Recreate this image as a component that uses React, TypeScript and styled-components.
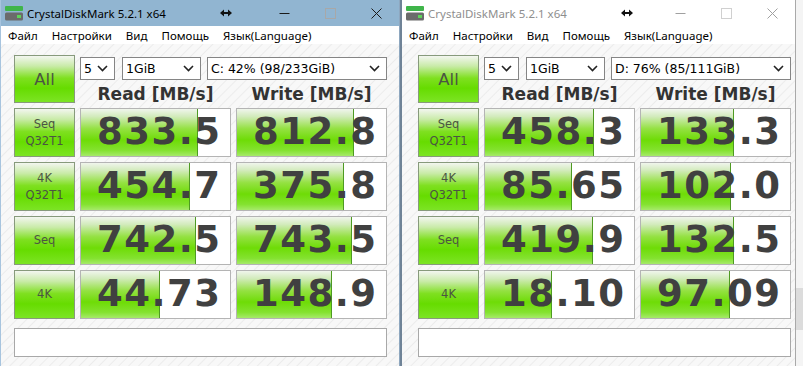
import React from "react";
import styled, { createGlobalStyle } from "styled-components";

const GlobalStyle = createGlobalStyle`
  html, body {
    margin: 0;
    padding: 0;
    background: #f0f0f0;
    overflow: hidden;
  }
  #root {
    width: 803px;
    height: 366px;
  }
`;

const Desktop = styled.div`
  display: flex;
  width: 803px;
  height: 366px;
  overflow: hidden;
  background: #f2f2f2;
`;

const Window = styled.div<{ $w: number; $active?: boolean }>`
  flex: 0 0 ${(p) => p.$w}px;
  display: flex;
  flex-direction: column;
  box-sizing: border-box;
  border-left: ${(p) => (p.$active ? "1px solid #a7c4de" : "2px solid #6f8397")};
  border-right: 1px solid ${(p) => (p.$active ? "#8ea7bf" : "#a9a9a9")};
  background: repeating-linear-gradient(135deg, #f8f8f8 0px, #f8f8f8 5px, #ececec 6px, #f8f8f8 7px);
  overflow: hidden;
`;

const TitleBar = styled.div<{ $active?: boolean }>`
  height: 26px;
  flex: 0 0 26px;
  display: flex;
  align-items: center;
  background: ${(p) => (p.$active ? "#91b5d1" : "#ffffff")};
  color: ${(p) => (p.$active ? "#000" : "#8e8e8e")};
  font-family: "Noto Sans", "Open Sans", sans-serif;
  font-size: 11.5px;
`;

const AppIcon = styled.svg`
  margin-left: 4px;
  flex: 0 0 18px;
`;

const Title = styled.div`
  margin-left: 4px;
  width: 193px;
  white-space: nowrap;
`;

const Arrow = styled.svg`
  flex: 0 0 12px;
`;

const Spacer = styled.div`
  flex: 1;
`;

const CaptionButton = styled.div`
  width: 46px;
  height: 26px;
  display: flex;
  align-items: center;
  justify-content: center;
`;

const MenuBar = styled.div`
  height: 18px;
  flex: 0 0 18px;
  display: flex;
  align-items: center;
  background: #ffffff;
  font-family: "Noto Sans", "Open Sans", sans-serif;
  font-size: 11.5px;
  color: #000;
`;

const MenuItem = styled.span`
  padding: 0 7px;
  white-space: nowrap;
`;

const Content = styled.div<{ $pad: number }>`
  padding: 11px 0 0 ${(p) => p.$pad}px;
`;

const Board = styled.div`
  display: grid;
  grid-template-columns: 61px 151px 151px;
  grid-template-rows: 48px repeat(4, 49px);
  gap: 5px;
`;

const LabelButton = styled.div<{ $big?: boolean }>`
  box-sizing: border-box;
  border: 1px solid #879a7c;
  background: linear-gradient(
    to bottom,
    #f3f6f0 0%,
    #c9eba8 22%,
    #7fe020 48%,
    #66dc00 70%,
    #7ce424 100%
  );
  display: flex;
  flex-direction: column;
  align-items: center;
  justify-content: center;
  color: #4b5543;
  font-family: "DejaVu Sans", Verdana, sans-serif;
  font-size: ${(p) => (p.$big ? "16.5px" : "11.5px")};
  line-height: 17px;
`;

const Controls = styled.div`
  grid-column: 2 / 4;
  display: flex;
  flex-direction: column;
`;

const ComboRow = styled.div`
  display: flex;
  margin-top: 2px;
  height: 23px;
`;

const Combo = styled.div<{ $w: number; $gap: number }>`
  box-sizing: border-box;
  width: ${(p) => p.$w}px;
  margin-right: ${(p) => p.$gap}px;
  height: 23px;
  border: 1px solid #858585;
  background: #fff;
  display: flex;
  align-items: center;
  padding: 0 6px 0 3px;
  font-family: "DejaVu Sans", Verdana, sans-serif;
  font-size: 12.5px;
  color: #000;
`;

const ComboText = styled.span`
  flex: 1;
  white-space: nowrap;
`;

const HeaderRow = styled.div`
  display: grid;
  grid-template-columns: 151px 151px;
  column-gap: 5px;
  height: 23px;
  align-items: end;
`;

const Header = styled.div`
  text-align: center;
  font-family: "DejaVu Sans", Verdana, sans-serif;
  font-weight: bold;
  font-size: 17px;
  line-height: 1;
  color: #333;
`;

const ResultBox = styled.div`
  position: relative;
  box-sizing: border-box;
  border: 1px solid #b4b4b4;
  background: #fff;
  overflow: hidden;
`;

const Fill = styled.div`
  position: absolute;
  left: 0;
  top: 0;
  bottom: 0;
  box-sizing: border-box;
  border-right: 1px solid #4e9a22;
  background: linear-gradient(
    to bottom,
    #f0f5ec 0%,
    #d2ebbb 16%,
    #94e142 42%,
    #6edc06 66%,
    #84e230 88%,
    #a6ea6a 100%
  );
`;

const Score = styled.div`
  position: relative;
  text-align: right;
  padding-right: 8.5px;
  font-family: "DejaVu Sans", Verdana, sans-serif;
  font-weight: bold;
  font-size: 37px;
  letter-spacing: 1.5px;
  line-height: 45px;
  color: #404040;
`;

const Comment = styled.div`
  box-sizing: border-box;
  width: 373px;
  height: 29px;
  margin-top: 9px;
  border: 1px solid #a8a8a8;
  background: #fff;
`;

const Strip = styled.div`
  flex: 1;
  display: flex;
  flex-direction: column;
  background: #f4f4f4;
`;

const StripBlock = styled.div`
  margin-top: 288px;
  height: 42px;
  background: #dcdcdc;
`;

type Data = { drive: string; rows: [string, string][] };

const labels = [["Seq", "Q32T1"], ["4K", "Q32T1"], ["Seq"], ["4K"]];

const meter = (v: string) => {
  const n = parseFloat(v);
  const r = (Math.log10(n) + 1) / 5;
  return Math.max(0, Math.min(1, r)) * 100;
};

function Chevron() {
  return (
    <svg width="11" height="7" viewBox="0 0 11 7">
      <polyline points="1,1 5.5,5.5 10,1" fill="none" stroke="#222" strokeWidth="1.6" />
    </svg>
  );
}

function Result({ value }: { value: string }) {
  return (
    <ResultBox>
      <Fill style={{ width: `${meter(value)}%` }} />
      <Score>{value}</Score>
    </ResultBox>
  );
}

function DiskWindow({ data, active, width, pad }: { data: Data; active?: boolean; width: number; pad: number }) {
  const glyph = active ? "#1a1a1a" : "#a0a0a0";
  return (
    <Window $w={width} $active={active}>
      <TitleBar $active={active}>
        <AppIcon width="18" height="15" viewBox="0 0 18 15">
          <rect x="0" y="0" width="18" height="5" rx="1" fill="#3fb54a" />
          <rect x="0" y="6.5" width="18" height="8" rx="1.5" fill="#6b6b6b" />
          <rect x="12" y="9" width="4" height="3" fill="#5fd35a" />
        </AppIcon>
        <Title>CrystalDiskMark 5.2.1 x64</Title>
        <Arrow width="12" height="8" viewBox="0 0 12 8">
          <path d="M0 4 L4 0.5 L4 3 L8 3 L8 0.5 L12 4 L8 7.5 L8 5 L4 5 L4 7.5 Z" fill="#111" />
        </Arrow>
        <Spacer />
        <CaptionButton>
          <svg width="11" height="11" viewBox="0 0 11 11">
            <line x1="0.5" y1="5.5" x2="10.5" y2="5.5" stroke={glyph} strokeWidth="1" />
          </svg>
        </CaptionButton>
        <CaptionButton>
          <svg width="11" height="11" viewBox="0 0 11 11">
            <rect x="0.5" y="0.5" width="10" height="10" fill="none" stroke={active ? "#a8a8a8" : "#d0d0d0"} strokeWidth="1" />
          </svg>
        </CaptionButton>
        <CaptionButton>
          <svg width="11" height="11" viewBox="0 0 11 11">
            <path d="M0.5 0.5 L10.5 10.5 M10.5 0.5 L0.5 10.5" stroke={glyph} strokeWidth="1" />
          </svg>
        </CaptionButton>
      </TitleBar>
      <MenuBar>
        <MenuItem>Файл</MenuItem>
        <MenuItem>Настройки</MenuItem>
        <MenuItem>Вид</MenuItem>
        <MenuItem>Помощь</MenuItem>
        <MenuItem>Язык(Language)</MenuItem>
      </MenuBar>
      <Content $pad={pad}>
        <Board>
          <LabelButton $big>All</LabelButton>
          <Controls>
            <ComboRow>
              <Combo $w={35} $gap={7}>
                <ComboText>5</ComboText>
                <Chevron />
              </Combo>
              <Combo $w={79} $gap={6}>
                <ComboText>1GiB</ComboText>
                <Chevron />
              </Combo>
              <Combo $w={180} $gap={0}>
                <ComboText>{data.drive}</ComboText>
                <Chevron />
              </Combo>
            </ComboRow>
            <HeaderRow>
              <Header>Read [MB/s]</Header>
              <Header>Write [MB/s]</Header>
            </HeaderRow>
          </Controls>
          {data.rows.map((row, i) => (
            <React.Fragment key={i}>
              <LabelButton>
                {labels[i].map((l) => (
                  <span key={l}>{l}</span>
                ))}
              </LabelButton>
              <Result value={row[0]} />
              <Result value={row[1]} />
            </React.Fragment>
          ))}
        </Board>
        <Comment />
      </Content>
    </Window>
  );
}

const leftData: Data = {
  drive: "C: 42% (98/233GiB)",
  rows: [
    ["833.5", "812.8"],
    ["454.7", "375.8"],
    ["742.5", "743.5"],
    ["44.73", "148.9"],
  ],
};

const rightData: Data = {
  drive: "D: 76% (85/111GiB)",
  rows: [
    ["458.3", "133.3"],
    ["85.65", "102.0"],
    ["419.9", "132.5"],
    ["18.10", "97.09"],
  ],
};

export default function App() {
  return (
    <>
      <GlobalStyle />
      <Desktop>
        <DiskWindow data={leftData} active width={400} pad={13} />
        <DiskWindow data={rightData} width={396} pad={16} />
        <Strip>
          <StripBlock />
        </Strip>
      </Desktop>
    </>
  );
}
